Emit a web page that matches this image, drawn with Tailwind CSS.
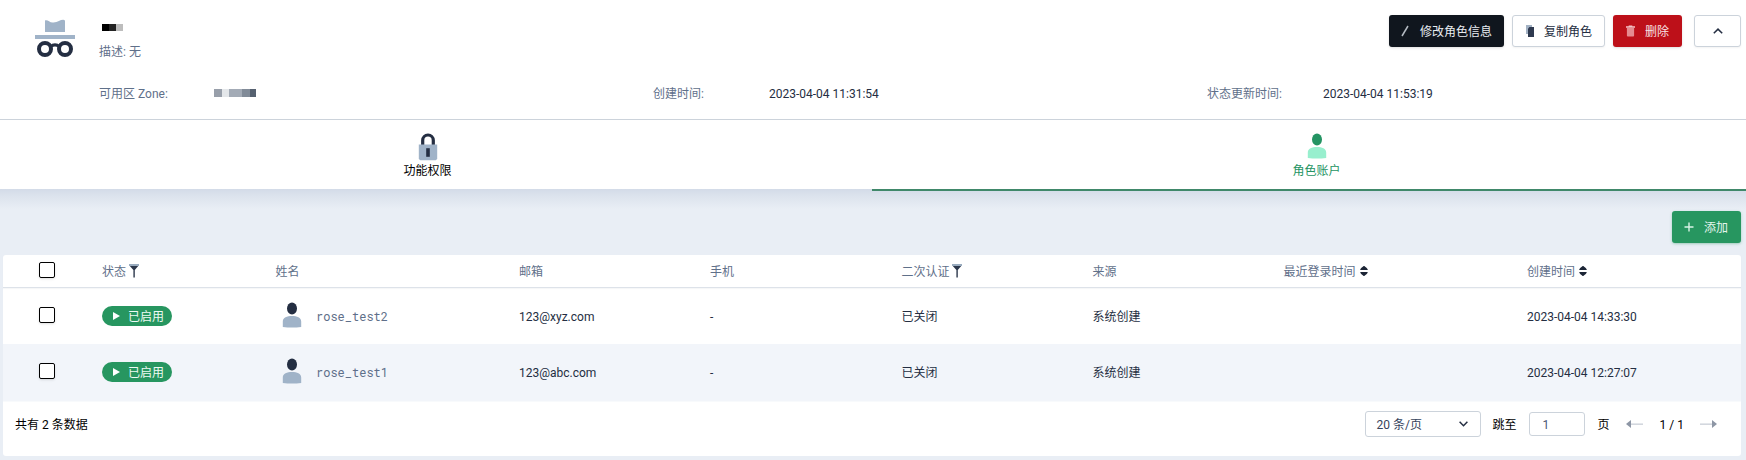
<!DOCTYPE html>
<html lang="zh-CN">
<head>
<meta charset="utf-8">
<title>角色账户</title>
<script src="https://cdn.jsdelivr.net/npm/@tailwindcss/browser@4"></script>
</head>
<body class="w-[1746px] h-[460px] overflow-hidden bg-[#e9eef5] font-['Roboto','Noto_Sans_CJK_SC',sans-serif] text-xs leading-5 text-[#242e42] whitespace-nowrap">
<svg class="hidden">
  <symbol id="user" viewBox="0 0 20 26">
    <ellipse cx="10" cy="6.500" rx="5" ry="6" fill="currentColor"/>
    <path d="M.8 25v-5.500C.8 15.500 5 14 10 14s9.200 1.500 9.200 5.500V25q-9.200 1-18.400 0z" fill="var(--color-sub)"/>
  </symbol>
  <symbol id="funnel" viewBox="0 0 10 14">
    <path d="M0 0h10v2H0z" fill="#9aacbf"/>
    <path d="M.8 2h8.400L5.800 6v7.500H4.400V6z" fill="#2c374b"/>
  </symbol>
  <symbol id="sort" viewBox="0 0 8 10">
    <path d="M4 0c.7 0 3.800 2.800 3.800 3.500 0 .4-.2.6-.6.600H.8c-.4 0-.6-.2-.6-.6C.2 2.800 3.300 0 4 0zM4 10c.7 0 3.800-2.800 3.800-3.500 0-.4-.2-.6-.6-.6H.8c-.4 0-.6.2-.6.6C.2 7.200 3.300 10 4 10z" fill="#1c2536"/>
  </symbol>
</svg>

<header class="h-[120px] bg-white border-b border-[#ccd3db]">
  <div class="flex h-[79px]">
    <svg class="ml-[35px] mt-[19px] w-10 h-10 shrink-0" viewBox="0 0 40 40">
      <path d="M10 13V1.500C13 .5 14.500 4 18.500 3.500 23 3 25.500.5 28.500.7L30 1.500V13zM0 16h40v4H0z" fill="#a0b3c8"/>
      <g fill="none" stroke="#242e42" stroke-width="4"><circle cx="10" cy="30" r="6"/><circle cx="30" cy="30" r="6"/><path d="M16 27.500c2-2.200 6-2.200 8 0" stroke-width="3.200"/></g>
    </svg>
    <div class="ml-6 pt-6 grow">
      <div class="ml-[3px] flex h-[7px] mb-[11px]"><i class="w-[7px] bg-black"></i><i class="w-[7px] bg-[#232323]"></i><i class="w-[7px] bg-[#bdbdbd]"></i></div>
      <div class="text-[#5f708a]">描述: 无</div>
    </div>
    <div class="flex pt-[15px] mr-[5px] h-[47px]">
      <button class="w-[115px] h-8 rounded-[3px] bg-[#10161e] text-[#e8ecf1] flex items-center pl-[12px] shadow-sm">
        <svg class="w-2 h-3" viewBox="0 0 8 12"><path d="M1 11 7 1" stroke="#b4bac2" stroke-width="1.500"/></svg>
        <span class="ml-[11px] pt-0.5">修改角色信息</span>
      </button>
      <button class="ml-2 w-[93px] h-8 rounded-[3px] border border-[#ccd3db] bg-white flex items-center pl-[13px] shadow-xs">
        <svg class="w-[9px] h-3" viewBox="0 0 9 12"><path d="M0 0h6v9H0z" fill="#a3b2c4"/><path d="M2 3.500 3.500 2H8v10H2z" fill="#2f3a50"/></svg>
        <span class="ml-[9px] pt-0.5">复制角色</span>
      </button>
      <button class="ml-2 w-[69px] h-8 rounded-[3px] bg-[#bd1019] text-[#f7e3e5] flex items-center pl-[13px] shadow-sm">
        <svg class="w-[9px] h-3" viewBox="0 0 10 12"><path d="M0 .6h3V0h4v.6h3v1.900H0z" fill="#f3c4c7"/><path d="M1 2.500h8V11q0 1-1 1H2q-1 0-1-1z" fill="#e58b90"/></svg>
        <span class="ml-[10px] pt-0.5">删除</span>
      </button>
      <button class="ml-3 w-[47px] h-8 rounded-[3px] border border-[#ccd3db] bg-white flex items-center justify-center shadow-xs">
        <svg class="w-2.5 h-1.5" viewBox="0 0 10 6"><path d="M.8 5.300 5 1.100l4.200 4.200" fill="none" stroke="#242e42" stroke-width="1.500"/></svg>
      </button>
    </div>
  </div>
  <div class="flex pl-[99px] pt-[5px]">
    <div class="w-[554px] flex">
      <span class="w-[115px] text-[#5f708a]">可用区 Zone:</span>
      <span class="flex h-2 mt-[5px]"><i class="w-2 bg-[#989faa]"></i><i class="w-[7px] bg-[#e4e7ea]"></i><i class="w-[13px] bg-[#a3abb6]"></i><i class="w-2 bg-[#818b98]"></i><i class="w-1.5 bg-[#566170]"></i></span>
    </div>
    <div class="w-[554px] flex"><span class="w-[116px] text-[#5f708a]">创建时间:</span><span>2023-04-04 11:31:54</span></div>
    <div class="flex"><span class="w-[116px] text-[#5f708a]">状态更新时间:</span><span>2023-04-04 11:53:19</span></div>
  </div>
</header>

<nav class="h-[69px] bg-white grid grid-cols-[872px_874px]">
  <a class="flex flex-col items-center pt-[13px] pr-[17px] text-black">
    <svg class="w-5 h-7" viewBox="0 0 20 28"><path d="M4.700 13V7.300a5.300 5.300 0 0 1 10.600 0V13" fill="none" stroke="#242e42" stroke-width="3.200"/><path d="M.8 11.500h18.400V26l-1.500 1.200H2.300L.8 26z" fill="#a0b3c8"/><path d="M8.200 15.200h3.600v8.600H8.200z" fill="#242e42"/></svg>
    <span>功能权限</span>
  </a>
  <a class="flex flex-col items-center pt-[13px] pl-[15px] h-[71px] border-b-2 border-[#40886a] text-[#249463] [--color-sub:#98efce] relative z-10">
    <svg class="w-5 h-[26px] mb-0.5"><use href="#user"/></svg>
    <span>角色账户</span>
  </a>
</nav>

<main class="h-[271px] bg-[linear-gradient(180deg,#d3dbe8_0px,#dce3ed_7px,#e9eef5_20px)] pl-[3px] pr-[5px]">
  <div class="flex justify-end pt-[22px] h-[66px]">
    <button class="w-[69px] h-8 rounded-[3px] bg-[#279660] text-[#e4f5ed] flex items-center pl-3 shadow-sm shadow-[#279660]/30">
      <svg class="w-2.5 h-2.5" viewBox="0 0 10 10"><path d="M5 .5v9M.5 5h9" stroke="#d9f3e6" stroke-width="1.400"/></svg>
      <span class="ml-[10px] pt-0.5">添加</span>
    </button>
  </div>
  <section class="bg-white h-[201px] rounded-[3px]">
    <div class="h-[33px] border-b border-[#dde2e9] grid grid-cols-[99px_173.500px_243.500px_191px_191.500px_191px_191px_243.500px_1fr] pt-[7px] text-[#5f708a] shadow-[0_1px_1px_rgba(36,46,66,0.04)]">
      <span class="ml-9 size-4 rounded-[2px] border-[1.500px] border-black bg-white shadow-sm"></span>
      <span class="flex">状态<svg class="w-2.5 h-3.5 ml-[3px] mt-[2px]"><use href="#funnel"/></svg></span>
      <span>姓名</span><span>邮箱</span><span>手机</span>
      <span class="flex">二次认证<svg class="w-2.5 h-3.5 ml-[2px] mt-[2px]"><use href="#funnel"/></svg></span>
      <span>来源</span>
      <span class="flex">最近登录时间<svg class="w-2 h-2.5 ml-1 mt-1"><use href="#sort"/></svg></span>
      <span class="flex">创建时间<svg class="w-2 h-2.5 ml-1 mt-1"><use href="#sort"/></svg></span>
    </div>

    <div class="h-14 grid grid-cols-[99px_173.500px_243.500px_191px_191.500px_191px_191px_243.500px_1fr] pt-[19px]">
      <span class="ml-9 size-4 rounded-[2px] border-[1.500px] border-black bg-white shadow-sm"></span>
      <span class="-mt-px w-[70px] h-5 rounded-full bg-[#279660] text-[#eefaf4] flex items-center pl-[11px]"><svg class="w-[7px] h-2" viewBox="0 0 7 8"><path d="M0 0 7 4 0 8z" fill="#fff"/></svg><span class="ml-2 pt-px">已启用</span></span>
      <span class="flex [--color-sub:#a0b3c8] text-[#242e42]"><svg class="ml-[6.500px] w-5 h-[26px] -mt-[5px] shrink-0"><use href="#user"/></svg><span class="ml-[14px] -mt-px font-['Roboto_Mono','DejaVu_Sans_Mono',monospace] text-[#5f708a]">rose_test2</span></span>
      <span>123@xyz.com</span><span>-</span><span>已关闭</span><span>系统创建</span><span></span><span>2023-04-04 14:33:30</span>
    </div>

    <div class="h-[57px] bg-[#f2f5fa] grid grid-cols-[99px_173.500px_243.500px_191px_191.500px_191px_191px_243.500px_1fr] pt-[19px]">
      <span class="ml-9 size-4 rounded-[2px] border-[1.500px] border-black bg-white shadow-sm"></span>
      <span class="-mt-px w-[70px] h-5 rounded-full bg-[#279660] text-[#eefaf4] flex items-center pl-[11px]"><svg class="w-[7px] h-2" viewBox="0 0 7 8"><path d="M0 0 7 4 0 8z" fill="#fff"/></svg><span class="ml-2 pt-px">已启用</span></span>
      <span class="flex [--color-sub:#a0b3c8] text-[#242e42]"><svg class="ml-[6.500px] w-5 h-[26px] -mt-[5px] shrink-0"><use href="#user"/></svg><span class="ml-[14px] -mt-px font-['Roboto_Mono','DejaVu_Sans_Mono',monospace] text-[#5f708a]">rose_test1</span></span>
      <span>123@abc.com</span><span>-</span><span>已关闭</span><span>系统创建</span><span></span><span>2023-04-04 12:27:07</span>
    </div>

    <div class="h-[55px] border-t border-[#f8fafc] flex items-start pl-3 pr-6 pt-[9px] text-black">
      <span class="pt-1 grow">共有 2 条数据</span>
      <div class="w-[116px] h-[26px] rounded-[3px] border border-[#ccd3db] flex items-center pl-[11px] pr-3 text-[#36435c]">
        <span class="grow pt-px">20 条/页</span>
        <svg class="w-[9px] h-1.5" viewBox="0 0 9 6"><path d="M.6.800 4.500 4.800 8.400.8" fill="none" stroke="#242e42" stroke-width="1.500"/></svg>
      </div>
      <span class="ml-[12px] pt-1">跳至</span>
      <div class="ml-3 mt-px w-14 h-6 rounded-[3px] border border-[#ccd3db] flex items-center pl-[13px] pt-px text-[#4a5974]">1</div>
      <span class="ml-[13px] pt-1">页</span>
      <svg class="ml-4 mt-[9px] w-[17px] h-2" viewBox="0 0 17 8"><path d="M4 3.500h13v1.300H4z" fill="#c9ced6"/><path d="M0 4 5 0v8z" fill="#8d96a5"/></svg>
      <span class="ml-[17px] pt-1">1 / 1</span>
      <svg class="ml-4 mt-[9px] w-[17px] h-2" viewBox="0 0 17 8"><path d="M0 3.500h13v1.300H0z" fill="#c9ced6"/><path d="m17 4-5-4v8z" fill="#8d96a5"/></svg>
    </div>
  </section>
</main>
</body>
</html>
